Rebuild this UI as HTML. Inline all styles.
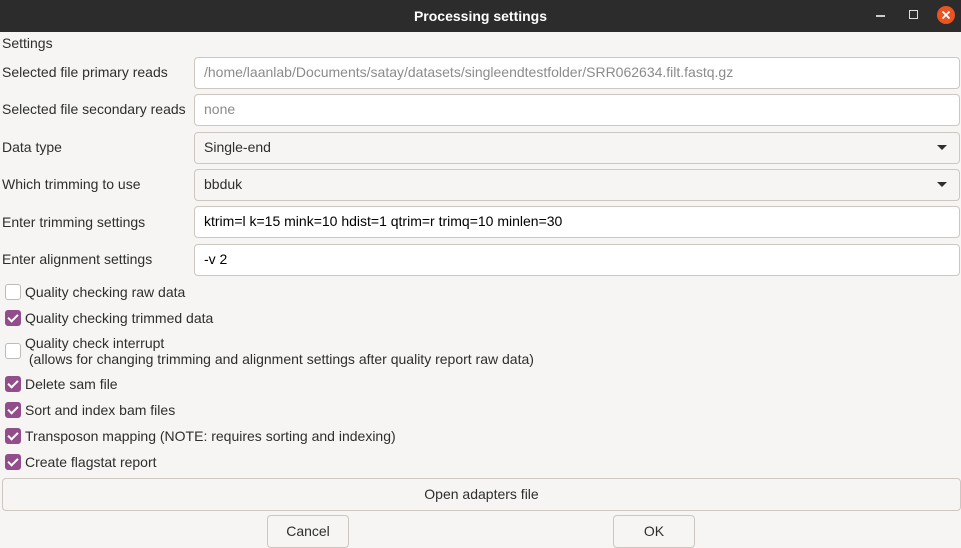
<!DOCTYPE html><html><head><style>
body{margin:0;width:961px;height:548px;background:#f6f5f4;font-family:"Liberation Sans",sans-serif;font-size:14px;color:#2e2e2e;position:relative;overflow:hidden}
.a{position:absolute}
.tb{left:0;top:0;width:961px;height:32px;background:#2c2c2c;color:#fff;font-weight:bold;text-align:center;line-height:32px;font-size:14px}
.in{position:absolute;left:194px;width:755px;height:30px;border:1px solid #cdc7c2;border-radius:4px;background:#fff;line-height:29px;padding-left:9px;box-sizing:content-box}
.lb{position:absolute;left:2px}
.cb{position:absolute;left:5px;width:14px;height:14px;border:1px solid #bbb;border-radius:3px;background:#fff}
.cb.on{background:#924d8b;border-color:#924d8b}
.cb.on:after{content:"";position:absolute;left:4px;top:1px;width:4px;height:8px;border:solid #fff;border-width:0 2px 2px 0;transform:rotate(45deg)}
.ct{position:absolute;left:25px}
.btn{position:absolute;border:1px solid #cdc7c2;border-radius:4px;background:#f6f5f4;text-align:center;line-height:31px}
.arr{position:absolute;right:12px;top:12px;border-left:5px solid transparent;border-right:5px solid transparent;border-top:5px solid #2e2e2e}
</style></head><body>
<div class="a tb">Processing settings</div>
<div class="a" style="left:876px;top:15px;width:9px;height:2px;background:#ccc"></div>
<div class="a" style="left:909px;top:10px;width:7px;height:7px;border:1px solid #ddd"></div>
<div class="a" style="left:937px;top:6px;width:18px;height:18px;border-radius:50%;background:#e95420"><svg width="18" height="18" style="position:absolute;left:0;top:0"><path d="M5.5 5.5L12.5 12.5M12.5 5.5L5.5 12.5" stroke="#fff" stroke-width="1.8"/></svg></div>
<div class="lb" style="top:35px">Settings</div>
<div class="lb" style="top:64px">Selected file primary reads</div>
<div class="in" style="top:57px;color:#8b8b8b">/home/laanlab/Documents/satay/datasets/singleendtestfolder/SRR062634.filt.fastq.gz</div>
<div class="lb" style="top:101px">Selected file secondary reads</div>
<div class="in" style="top:94px;color:#8b8b8b">none</div>
<div class="lb" style="top:139px">Data type</div>
<div class="in" style="top:132px;background:#f6f5f4">Single-end<div class="arr"></div></div>
<div class="lb" style="top:176px">Which trimming to use</div>
<div class="in" style="top:169px;background:#f6f5f4">bbduk<div class="arr"></div></div>
<div class="lb" style="top:214px">Enter trimming settings</div>
<div class="in" style="top:206px;color:#000">ktrim=l k=15 mink=10 hdist=1 qtrim=r trimq=10 minlen=30</div>
<div class="lb" style="top:251px">Enter alignment settings</div>
<div class="in" style="top:244px;color:#000">-v 2</div>
<div class="cb" style="top:284px"></div><div class="ct" style="top:284px">Quality checking raw data</div>
<div class="cb on" style="top:310px"></div><div class="ct" style="top:310px">Quality checking trimmed data</div>
<div class="cb" style="top:343px"></div><div class="ct" style="top:335px;line-height:16px">Quality check interrupt<br>&nbsp;(allows for changing trimming and alignment settings after quality report raw data)</div>
<div class="cb on" style="top:376px"></div><div class="ct" style="top:376px">Delete sam file</div>
<div class="cb on" style="top:402px"></div><div class="ct" style="top:402px">Sort and index bam files</div>
<div class="cb on" style="top:428px"></div><div class="ct" style="top:428px">Transposon mapping (NOTE: requires sorting and indexing)</div>
<div class="cb on" style="top:454px"></div><div class="ct" style="top:454px">Create flagstat report</div>
<div class="btn" style="left:2px;top:478px;width:957px;height:31px">Open adapters file</div>
<div class="btn" style="left:267px;top:515px;width:80px;height:31px">Cancel</div>
<div class="btn" style="left:613px;top:515px;width:80px;height:31px">OK</div>
</body></html>
